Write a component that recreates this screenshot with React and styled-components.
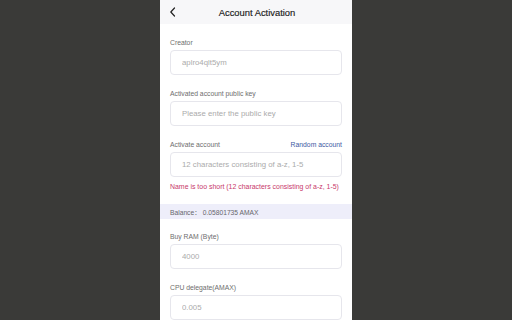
import React from "react";
import styled, { createGlobalStyle } from "styled-components";

const Global = createGlobalStyle`
  html, body { margin: 0; padding: 0; background: #3a3a38; }
  body { font-family: "Liberation Sans", Arial, "Noto Sans CJK SC", sans-serif; }
  * { box-sizing: border-box; }
`;

const Stage = styled.div`
  width: 512px;
  height: 320px;
  display: flex;
  justify-content: center;
  overflow: hidden;
  background: #3a3a38;
`;

const Phone = styled.div`
  width: 192px;
  height: 320px;
  background: #ffffff;
  overflow: hidden;
  display: flex;
  flex-direction: column;
`;

const Header = styled.div`
  height: 24px;
  flex: none;
  background: #f7f7f9;
  display: grid;
  grid-template-columns: 24px 1fr 24px;
  align-items: center;
`;

const Back = styled.div`
  display: flex;
  align-items: center;
  justify-content: center;
  padding-left: 2px;
`;

const Title = styled.div`
  text-align: center;
  font-size: 9.4px;
  color: #1a1a1a;
  padding-left: 2px;
  -webkit-text-stroke: 0.15px #1a1a1a;
`;

const Section = styled.div`
  padding: ${(p) => p.$top}px 10px ${(p) => p.$bottom}px;
`;

const Field = styled.div`
  margin-bottom: 14px;
  &:last-child { margin-bottom: 0; }
`;

const LabelRow = styled.div`
  height: 10px;
  display: flex;
  align-items: center;
  justify-content: space-between;
  margin-bottom: 2px;
`;

const Label = styled.span`
  font-size: 6.8px;
  color: #6e6e6e;
  line-height: 10px;
`;

const Link = styled.span`
  font-size: 6.8px;
  color: #3d5aa3;
  line-height: 10px;
`;

const Input = styled.input`
  display: block;
  width: 100%;
  height: 25px;
  border: 1px solid #e6e6ec;
  border-radius: 4px;
  padding: 0 11px;
  font-family: inherit;
  font-size: 7.8px;
  color: #ababab;
  background: #fff;
  outline: none;
  &::placeholder { color: #ababab; }
`;

const Error = styled.div`
  margin-top: 5px;
  height: 10px;
  line-height: 10px;
  font-size: 6.95px;
  color: #c8386b;
  white-space: nowrap;
`;

const Balance = styled.div`
  height: 17px;
  background: #eeeefa;
  padding: 0 10px;
  display: flex;
  align-items: center;
  font-size: 6.7px;
  color: #66666c;
`;

export default function App() {
  return (
    <>
      <Global />
      <Stage>
        <Phone>
          <Header>
            <Back>
              <svg width="8" height="10" viewBox="0 0 8 10">
                <path d="M5.5 1 L1.8 5 L5.5 9" fill="none" stroke="#222" strokeWidth="1.2" strokeLinecap="round" strokeLinejoin="round" />
              </svg>
            </Back>
            <Title>Account Activation</Title>
            <span />
          </Header>
          <Section $top={14} $bottom={12}>
            <Field>
              <LabelRow><Label>Creator</Label></LabelRow>
              <Input readOnly value="aplro4qlt5ym" />
            </Field>
            <Field>
              <LabelRow><Label>Activated account public key</Label></LabelRow>
              <Input readOnly placeholder="Please enter the public key" />
            </Field>
            <Field>
              <LabelRow>
                <Label>Activate account</Label>
                <Link>Random account</Link>
              </LabelRow>
              <Input readOnly placeholder="12 characters consisting of a-z, 1-5" />
              <Error>Name is too short (12 characters consisting of a-z, 1-5)</Error>
            </Field>
          </Section>
          <Balance>Balance：&nbsp;0.05801735 AMAX</Balance>
          <Section $top={13} $bottom={0}>
            <Field>
              <LabelRow><Label>Buy RAM (Byte)</Label></LabelRow>
              <Input readOnly value="4000" />
            </Field>
            <Field>
              <LabelRow><Label>CPU delegate(AMAX)</Label></LabelRow>
              <Input readOnly value="0.005" />
            </Field>
          </Section>
        </Phone>
      </Stage>
    </>
  );
}
